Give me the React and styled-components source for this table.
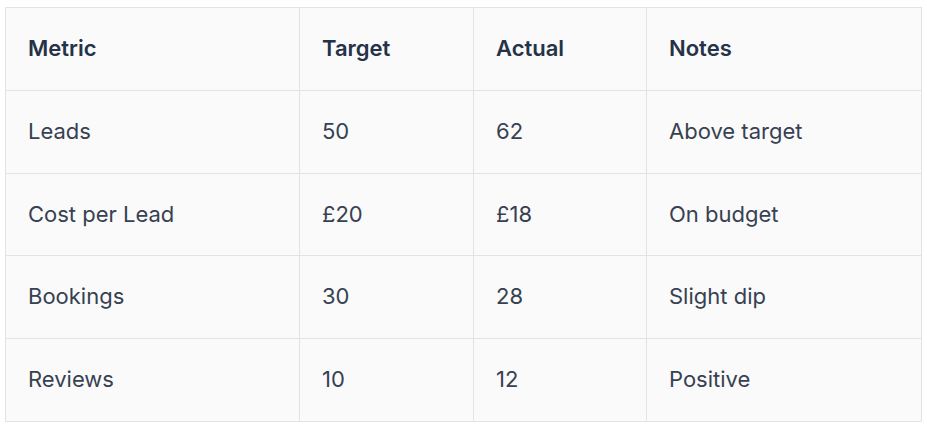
import React from "react";
import styled, { createGlobalStyle } from "styled-components";

const Global = createGlobalStyle`
  html, body { margin: 0; padding: 0; background: #ffffff; }
  body { font-family: Inter, "Noto Sans", sans-serif; }
`;

const Page = styled.div`
  padding: 7px 5px;
`;

const Table = styled.table`
  width: 916px;
  border-collapse: collapse;
  table-layout: fixed;
  background: #fafafa;
  border: 1px solid #e3e3e3;
  font-family: Inter, sans-serif;
  font-size: 22px;
  line-height: 31.8px;
`;

const Col = styled.col`
  width: ${(p) => p.$w}px;
`;

const Cell = styled.td`
  border: 1px solid #e3e3e3;
  padding: 25px 22px;
  text-align: left;
  color: ${(p) => (p.$head ? "#253248" : "#374151")};
  font-weight: ${(p) => (p.$head ? 600 : 400)};
  vertical-align: middle;
  white-space: nowrap;
`;

const widths = [294, 174, 173, 275];
const headers = ["Metric", "Target", "Actual", "Notes"];
const rows = [
  ["Leads", "50", "62", "Above target"],
  ["Cost per Lead", "£20", "£18", "On budget"],
  ["Bookings", "30", "28", "Slight dip"],
  ["Reviews", "10", "12", "Positive"],
];

export default function App() {
  return (
    <>
      <Global />
      <Page>
        <Table>
          <colgroup>
            {widths.map((w, i) => (
              <Col key={i} $w={w} />
            ))}
          </colgroup>
          <thead>
            <tr>
              {headers.map((h) => (
                <Cell as="th" $head key={h}>
                  {h}
                </Cell>
              ))}
            </tr>
          </thead>
          <tbody>
            {rows.map((r) => (
              <tr key={r[0]}>
                {r.map((c, i) => (
                  <Cell key={i}>{c}</Cell>
                ))}
              </tr>
            ))}
          </tbody>
        </Table>
      </Page>
    </>
  );
}
